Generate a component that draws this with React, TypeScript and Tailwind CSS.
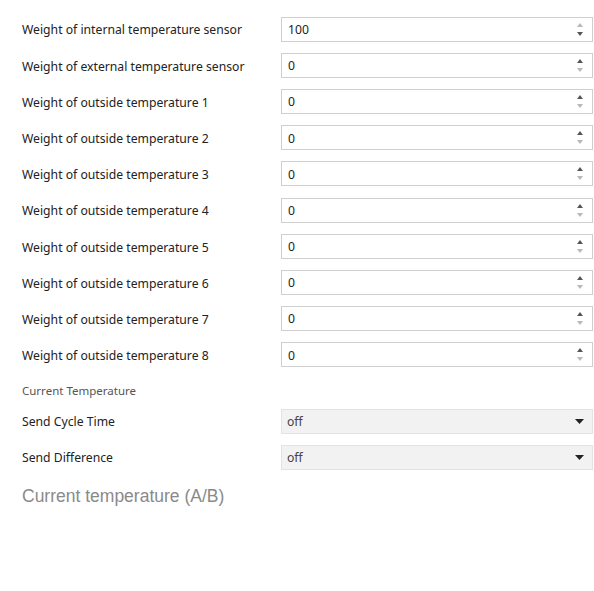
import React from "react";

const weights = [
  { label: "Weight of internal temperature sensor", value: "100", max: true },
  { label: "Weight of external temperature sensor", value: "0" },
  { label: "Weight of outside temperature 1", value: "0" },
  { label: "Weight of outside temperature 2", value: "0" },
  { label: "Weight of outside temperature 3", value: "0" },
  { label: "Weight of outside temperature 4", value: "0" },
  { label: "Weight of outside temperature 5", value: "0" },
  { label: "Weight of outside temperature 6", value: "0" },
  { label: "Weight of outside temperature 7", value: "0" },
  { label: "Weight of outside temperature 8", value: "0" },
];

function Spinner({ max }: { max?: boolean }) {
  const on = "#555555";
  const off = "#b8b8b8";
  return (
    <div className="flex flex-col items-center gap-[5px] pr-[9px]">
      <svg width="6" height="4" viewBox="0 0 6 4">
        <path d="M3 0 L6 4 L0 4 Z" fill={max ? off : on} />
      </svg>
      <svg width="6" height="4" viewBox="0 0 6 4">
        <path d="M0 0 L6 0 L3 4 Z" fill={max ? on : off} />
      </svg>
    </div>
  );
}

function Caret() {
  return (
    <svg width="9" height="5" viewBox="0 0 9 5" className="mr-[8px]">
      <path d="M0 0 L9 0 L4.5 5 Z" fill="#222" />
    </svg>
  );
}

export default function App() {
  return (
    <div
      className="h-[591px] w-[594px] bg-white pl-[22px] pr-px pt-[11px] text-[#222]"
      style={{ fontFamily: '"Noto Sans", "Open Sans", sans-serif' }}
    >
      {weights.map((w) => (
        <div key={w.label} className="flex h-[36.2px] items-center">
          <div className="w-[259px] pt-[3px] text-[12.2px]">{w.label}</div>
          <div className="flex h-[25px] flex-1 items-center justify-between border border-[#cfcfcf] bg-white pl-[6px] text-[12.2px]">
            <span className="pt-[2px]">{w.value}</span>
            <Spinner max={w.max} />
          </div>
        </div>
      ))}
      <div className="mt-[9px] text-[11.5px] text-[#555]">Current Temperature</div>
      {["Send Cycle Time", "Send Difference"].map((l, i) => (
        <div key={l} className={`flex h-[36px] items-center ${i === 0 ? "mt-[4px]" : ""}`}>
          <div className="w-[259px] pt-[2px] text-[12.2px]">{l}</div>
          <div className="flex h-[25px] flex-1 items-center justify-between border border-[#e3e3e3] bg-[#f2f2f2] pl-[5px] text-[12.2px] text-[#444]">
            <span className="pt-[2px]">off</span>
            <Caret />
          </div>
        </div>
      ))}
      <div
        className="mt-[8px] text-[17.5px] text-[#8a8a8a]"
        style={{ fontFamily: '"Liberation Sans", Arial, sans-serif' }}
      >
        Current temperature (A/B)
      </div>
    </div>
  );
}
